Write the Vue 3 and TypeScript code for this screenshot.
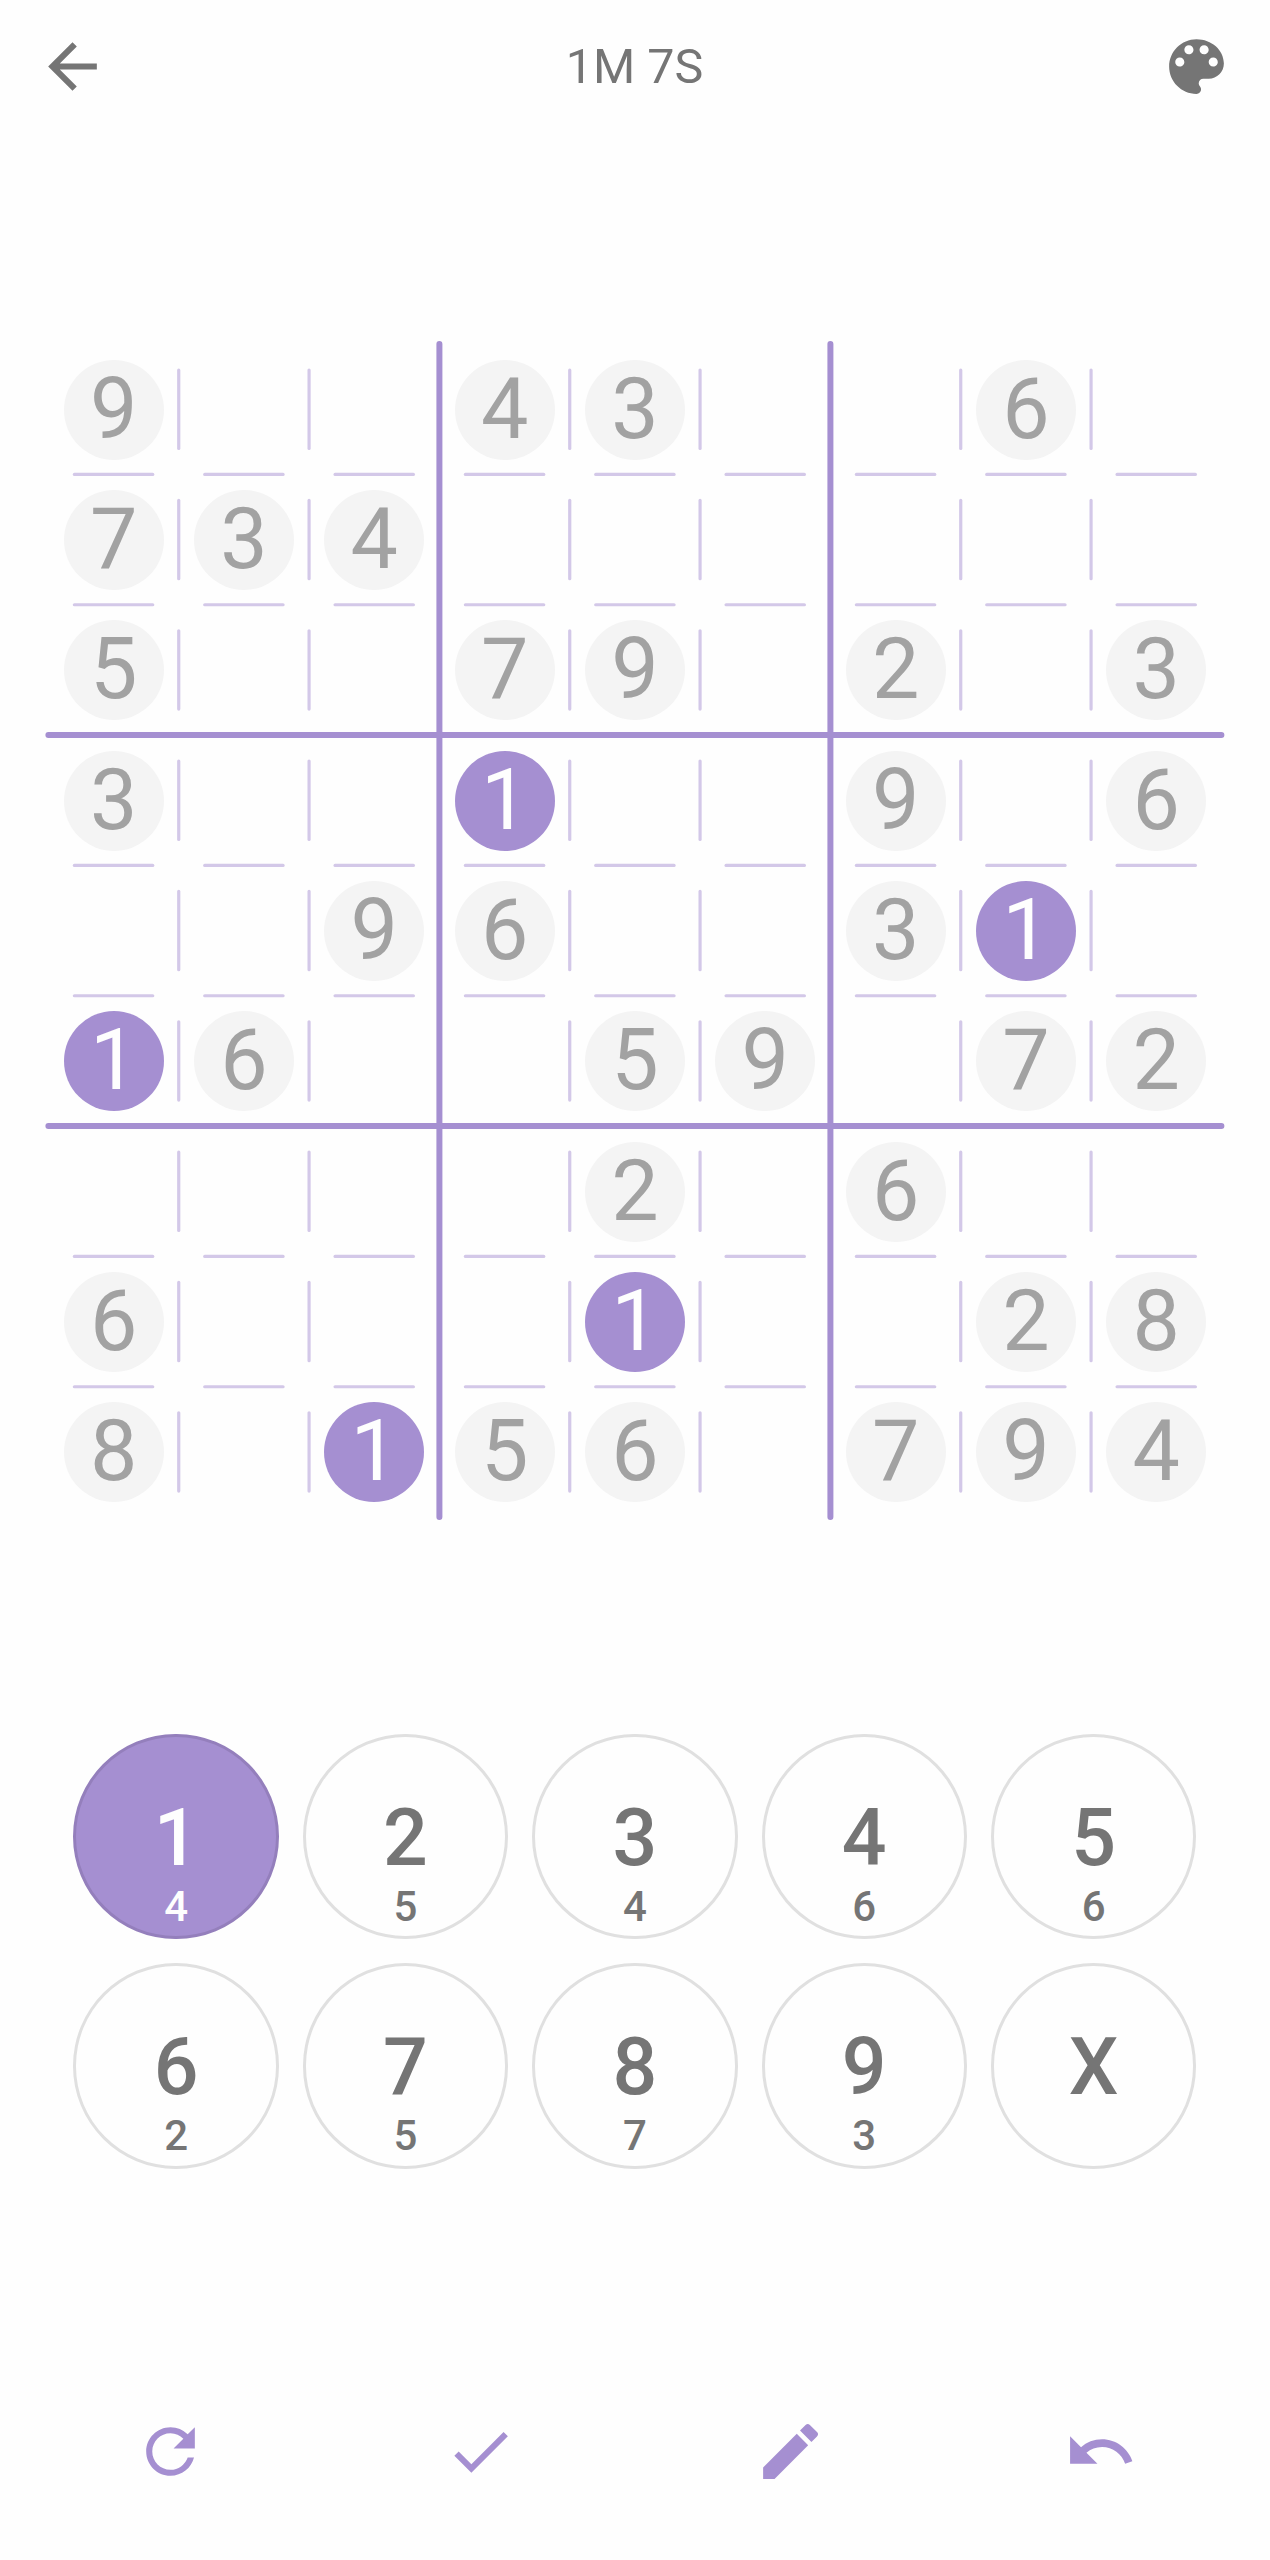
<script setup lang="ts">
import { ref } from 'vue'

interface Key {
  label: string
  left?: number
}

const size = 1173
const step = size / 9

const rows: string[] = [
  '9..43..6.',
  '734......',
  '5..79.2.3',
  '3..1..9.6',
  '..96..31.',
  '16..59.72',
  '....2.6..',
  '6...1..28',
  '8.156.794',
]
const cells: string[] = rows.join('').split('')

const keys: Key[] = [
  { label: '1', left: 4 },
  { label: '2', left: 5 },
  { label: '3', left: 4 },
  { label: '4', left: 6 },
  { label: '5', left: 6 },
  { label: '6', left: 2 },
  { label: '7', left: 5 },
  { label: '8', left: 7 },
  { label: '9', left: 3 },
  { label: 'X' },
]
const selected = ref('1')

// Short separators sit on every cell edge that is not a box edge.
const inner = [1, 2, 4, 5, 7, 8]
const marks = inner.flatMap((i) =>
  Array.from({ length: 9 }, (_, j) => ({ at: i * step, from: j * step + 26, to: (j + 1) * step - 26 })),
)
const boxes = [3 * step, 6 * step]

const tools = [
  {
    name: 'Restart',
    path: 'M17.65 6.35A7.958 7.958 0 0 0 12 4c-4.42 0-7.99 3.58-7.99 8s3.57 8 7.99 8c3.73 0 6.84-2.55 7.73-6h-2.08A5.99 5.99 0 0 1 12 18c-3.31 0-6-2.69-6-6s2.69-6 6-6c1.66 0 3.14.69 4.22 1.78L13 11h7V4l-2.35 2.35z',
  },
  { name: 'Check', path: 'M9 16.17 4.83 12l-1.42 1.41L9 19 21 7l-1.41-1.41z' },
  {
    name: 'Notes',
    path: 'M3 17.25V21h3.75L17.81 9.94l-3.75-3.75L3 17.25zM20.71 7.04a.996.996 0 0 0 0-1.41l-2.34-2.34a.996.996 0 0 0-1.41 0l-1.83 1.83 3.75 3.75 1.83-1.83z',
  },
  {
    name: 'Undo',
    path: 'M12.5 8c-2.65 0-5.05.99-6.9 2.6L2 7v9h9l-3.62-3.62c1.39-1.16 3.16-1.88 5.12-1.88 3.54 0 6.55 2.31 7.6 5.5l2.37-.78C21.08 11.03 17.15 8 12.5 8z',
  },
]
</script>

<template>
  <main class="game">
    <header class="bar">
      <button class="icon-btn" aria-label="Back">
        <svg class="icon" viewBox="0 0 24 24">
          <path d="M20 11H7.83l5.59-5.59L12 4l-8 8 8 8 1.41-1.41L7.83 13H20v-2z" />
        </svg>
      </button>
      <h1 class="timer">1M 7S</h1>
      <button class="icon-btn" aria-label="Theme">
        <svg class="icon" viewBox="0 0 24 24">
          <path
            d="M12 3c-4.97 0-9 4.03-9 9s4.03 9 9 9c.83 0 1.5-.67 1.5-1.5 0-.39-.15-.74-.39-1.01-.23-.26-.38-.61-.38-.99 0-.83.67-1.5 1.5-1.5H16c2.76 0 5-2.24 5-5 0-4.42-4.03-8-9-8zm-5.5 9c-.83 0-1.5-.67-1.5-1.5S5.67 9 6.5 9 8 9.67 8 10.5 7.33 12 6.5 12zm3-4C8.67 8 8 7.33 8 6.5S8.67 5 9.5 5s1.5.67 1.5 1.5S10.33 8 9.5 8zm5 0c-.83 0-1.5-.67-1.5-1.5S13.67 5 14.5 5s1.5.67 1.5 1.5S15.33 8 14.5 8zm3 4c-.83 0-1.5-.67-1.5-1.5S16.67 9 17.5 9s1.5.67 1.5 1.5-.67 1.5-1.5 1.5z"
          />
        </svg>
      </button>
    </header>

    <section class="board">
      <svg class="lines" :viewBox="`0.6 0.9 ${size} ${size}`">
        <g class="thin">
          <template v-for="(m, i) in marks" :key="i">
            <line :x1="m.at" :x2="m.at" :y1="m.from" :y2="m.to" />
            <line :x1="m.from" :x2="m.to" :y1="m.at" :y2="m.at" />
          </template>
        </g>
        <g class="thick">
          <template v-for="b in boxes" :key="b">
            <line :x1="b" :x2="b" y1="0" :y2="size" />
            <line x1="0" :x2="size" :y1="b" :y2="b" />
          </template>
        </g>
      </svg>
      <div v-for="(c, i) in cells" :key="i" class="cell">
        <span v-if="c !== '.'" class="disc" :class="{ active: c === selected }">{{ c }}</span>
      </div>
    </section>

    <section class="keypad">
      <button
        v-for="k in keys"
        :key="k.label"
        class="key"
        :class="{ active: k.label === selected }"
        @click="selected = k.label"
      >
        <span class="digit">{{ k.label }}</span>
        <span v-if="k.left" class="left">{{ k.left }}</span>
      </button>
    </section>

    <nav class="tools">
      <button v-for="t in tools" :key="t.name" class="icon-btn" :aria-label="t.name">
        <svg class="icon" viewBox="0 0 24 24"><path :d="t.path" /></svg>
      </button>
    </nav>
  </main>
</template>

<style>
body {
  margin: 0;
  background: #fefefe;
}
</style>

<style scoped>
.game {
  box-sizing: border-box;
  width: 1270px;
  height: 2560px;
  display: flex;
  flex-direction: column;
  background: #fefefe;
  color: #757575;
  font-family: Roboto, sans-serif;
}
button {
  margin: 0;
  padding: 0;
  border: 0;
  background: none;
  color: inherit;
  font: inherit;
}
.bar {
  box-sizing: border-box;
  height: 133px;
  padding: 0 37px 0 36px;
  display: flex;
  align-items: center;
  justify-content: space-between;
}
.icon-btn {
  display: flex;
  align-items: center;
  justify-content: center;
}
.icon {
  display: block;
  width: 73px;
  height: 73px;
  fill: currentColor;
}
.timer {
  margin: 0;
  font-size: 48.4px;
  font-weight: 400;
  line-height: 58px;
}
.board {
  position: relative;
  width: 1173px;
  height: 1173px;
  margin: 211.5px 0 0 48.5px;
  display: grid;
  grid-template-columns: repeat(9, 1fr);
  grid-template-rows: repeat(9, 1fr);
}
.lines {
  position: absolute;
  inset: 0;
  width: 100%;
  height: 100%;
  overflow: visible;
  stroke: #a58fd1;
  stroke-linecap: round;
}
.thin {
  stroke: #d3c8e8;
  stroke-width: 3.2;
}
.thick {
  stroke-width: 6;
}
.cell {
  display: flex;
  align-items: center;
  justify-content: center;
}
.disc {
  position: relative;
  width: 100px;
  height: 100px;
  border-radius: 50%;
  background: #f4f4f4;
  color: #a2a2a2;
  font-size: 84.4px;
  line-height: 100.6px;
  text-align: center;
}
.disc.active {
  background: #a58fd1;
  color: #fefefe;
}
.keypad {
  margin: 216.2px 0 0 73.4px;
  display: grid;
  grid-template-columns: repeat(5, 205.4px);
  grid-auto-rows: 205.5px;
  gap: 24px;
}
.key {
  box-sizing: border-box;
  border: 3px solid #e0e0e0;
  border-radius: 50%;
  display: flex;
  flex-direction: column;
  align-items: center;
  padding-top: 55px;
  font-weight: 500;
}
.key.active {
  background: #a58fd1;
  border-color: #947fbc;
  color: #fefefe;
}
.digit {
  font-size: 78.8px;
  line-height: 92px;
}
.left {
  margin-top: -2px;
  font-size: 42px;
  line-height: 50px;
}
.tools {
  margin-top: auto;
  height: 217px;
  padding: 0 15px;
  display: grid;
  grid-template-columns: repeat(4, 1fr);
  color: #a58fd1;
}
</style>
